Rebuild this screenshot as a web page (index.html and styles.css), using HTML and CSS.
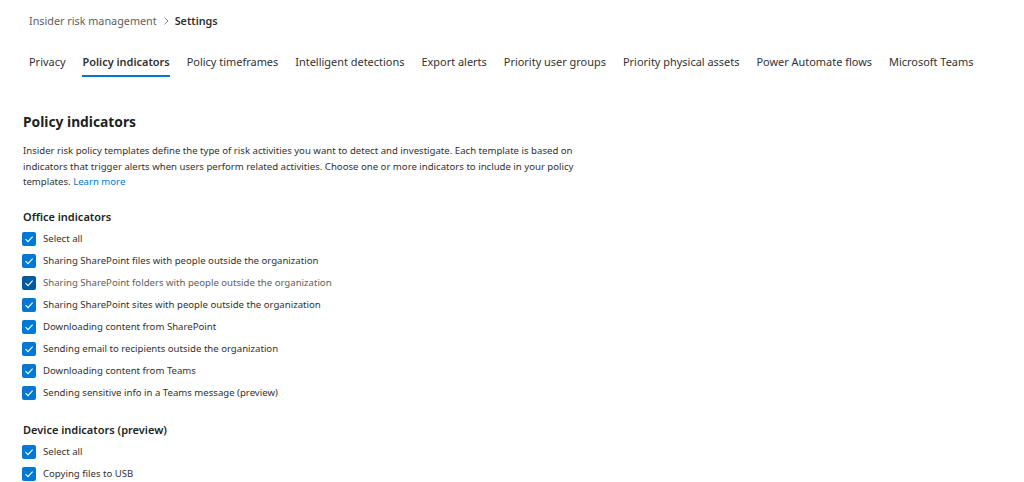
FILE: index.html
```html
<!DOCTYPE html>
<html lang="en">
<head>
<meta charset="utf-8">
<title>Settings</title>
<link rel="stylesheet" href="styles.css">
</head>
<body>
<div class="page">
  <nav class="breadcrumb">
    <span class="crumb">Insider risk management</span>
    <svg class="chev" width="8" height="10" viewBox="0 0 8 10"><path d="M2.5 1.5 L6 5 L2.5 8.5" fill="none" stroke="#8a8886" stroke-width="1"/></svg>
    <span class="crumb current">Settings</span>
  </nav>
  <div class="tabs">
    <span class="tab">Privacy</span>
    <span class="tab active">Policy indicators</span>
    <span class="tab">Policy timeframes</span>
    <span class="tab">Intelligent detections</span>
    <span class="tab">Export alerts</span>
    <span class="tab">Priority user groups</span>
    <span class="tab">Priority physical assets</span>
    <span class="tab">Power Automate flows</span>
    <span class="tab">Microsoft Teams</span>
  </div>
  <section class="content">
    <h1 class="title">Policy indicators</h1>
    <p class="desc">Insider risk policy templates define the type of risk activities you want to detect and investigate. Each template is based on indicators that trigger alerts when users perform related activities. Choose one or more indicators to include in your policy templates. <a class="link" href="#">Learn more</a></p>
    <h2 class="group">Office indicators</h2>
    <ul class="checks">
      <li class="check"><span class="box"><svg viewBox="0 0 14 14"><path d="M3.5 7.2 L6 9.6 L10.6 4.6" /></svg></span>Select all</li>
      <li class="check"><span class="box"><svg viewBox="0 0 14 14"><path d="M3.5 7.2 L6 9.6 L10.6 4.6" /></svg></span>Sharing SharePoint files with people outside the organization</li>
      <li class="check hover"><span class="box"><svg viewBox="0 0 14 14"><path d="M3.5 7.2 L6 9.6 L10.6 4.6" /></svg></span>Sharing SharePoint folders with people outside the organization</li>
      <li class="check"><span class="box"><svg viewBox="0 0 14 14"><path d="M3.5 7.2 L6 9.6 L10.6 4.6" /></svg></span>Sharing SharePoint sites with people outside the organization</li>
      <li class="check"><span class="box"><svg viewBox="0 0 14 14"><path d="M3.5 7.2 L6 9.6 L10.6 4.6" /></svg></span>Downloading content from SharePoint</li>
      <li class="check"><span class="box"><svg viewBox="0 0 14 14"><path d="M3.5 7.2 L6 9.6 L10.6 4.6" /></svg></span>Sending email to recipients outside the organization</li>
      <li class="check"><span class="box"><svg viewBox="0 0 14 14"><path d="M3.5 7.2 L6 9.6 L10.6 4.6" /></svg></span>Downloading content from Teams</li>
      <li class="check"><span class="box"><svg viewBox="0 0 14 14"><path d="M3.5 7.2 L6 9.6 L10.6 4.6" /></svg></span>Sending sensitive info in a Teams message (preview)</li>
    </ul>
    <h2 class="group second">Device indicators (preview)</h2>
    <ul class="checks">
      <li class="check"><span class="box"><svg viewBox="0 0 14 14"><path d="M3.5 7.2 L6 9.6 L10.6 4.6" /></svg></span>Select all</li>
      <li class="check"><span class="box"><svg viewBox="0 0 14 14"><path d="M3.5 7.2 L6 9.6 L10.6 4.6" /></svg></span>Copying files to USB</li>
    </ul>
  </section>
</div>
</body>
</html>
```
FILE: styles.css
```css
* { box-sizing: border-box; }
html, body { margin: 0; padding: 0; background: #ffffff; }
body {
  font-family: "Segoe UI", "Noto Sans", "Open Sans", sans-serif;
  color: #323130;
  overflow: hidden;
}
.breadcrumb {
  display: flex;
  align-items: center;
  gap: 4px;
  padding: 11px 0 0 29px;
  height: 31px;
  font-size: 10.8px;
  color: #605e5c;
}
.crumb { line-height: 18px; white-space: nowrap; }
.crumb.current { font-weight: 600; color: #323130; }
.chev { margin: 0 1px; }
.tabs {
  display: flex;
  gap: 17px;
  padding: 23px 0 0 29px;
  font-size: 10.95px;
  color: #323130;
}
.tab {
  white-space: nowrap;
  padding: 0 0 5px 0;
  line-height: 16px;
  border-bottom: 2px solid transparent;
}
.tab.active { font-weight: 600; border-bottom-color: #0078d4; }
.content { padding: 34px 0 0 23px; }
.title {
  margin: 0;
  font-size: 13.8px;
  font-weight: 700;
  color: #201f1e;
  line-height: 22px;
}
.desc {
  margin: 10px 0 0 0;
  width: 560px;
  font-size: 9.6px;
  line-height: 15.5px;
  color: #323130;
}
.link { color: #0078d4; text-decoration: none; }
.group {
  margin: 19px 0 0 0;
  font-size: 11px;
  font-weight: 600;
  line-height: 16px;
  color: #201f1e;
}
.group.second { margin-top: 18px; }
.checks { list-style: none; margin: 3px 0 0 -1px; padding: 0; }
.check {
  display: flex;
  align-items: center;
  gap: 7px;
  height: 22px;
  font-size: 9.6px;
  color: #323130;
  white-space: nowrap;
}
.box {
  flex: none;
  width: 14px;
  height: 14px;
  border-radius: 2px;
  background: #0078d4;
  display: flex;
}
.check.hover .box { background: #005a9e; }
.check.hover { color: #605e5c; }
.box svg { width: 14px; height: 14px; }
.box path { fill: none; stroke: #ffffff; stroke-width: 1.1; }
```
